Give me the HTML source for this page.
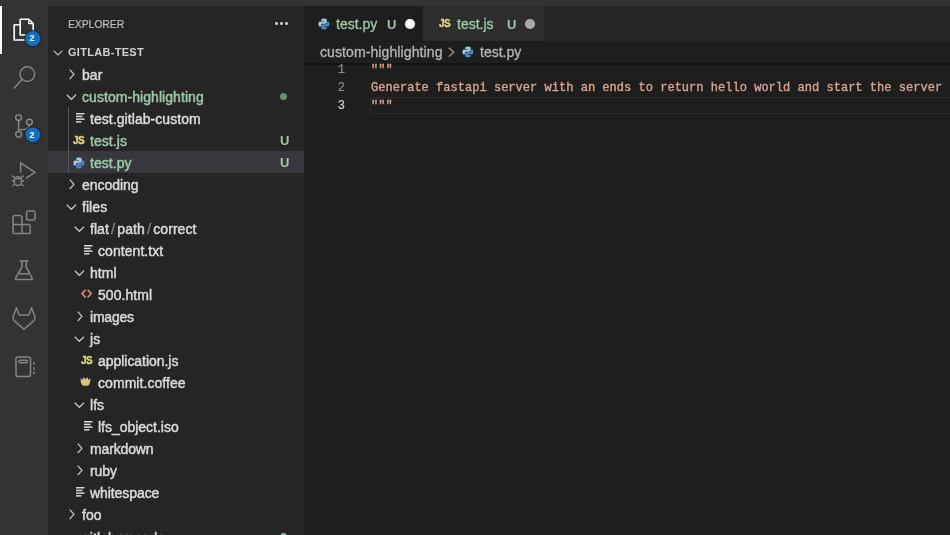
<!DOCTYPE html>
<html><head><meta charset="utf-8">
<style>
*{margin:0;padding:0;box-sizing:border-box}
html,body{width:950px;height:535px;overflow:hidden;background:#1e1e1e}
body{position:relative;font-family:"Liberation Sans",sans-serif;}
.abs{position:absolute}
svg{position:absolute;overflow:visible}
.abs,svg{will-change:transform}
.mono{font-family:"Liberation Mono",monospace}
</style></head><body>
<div class="abs" style="left:0;top:0;width:950px;height:6px;background:#333333"></div>
<div class="abs" style="left:0;top:6px;width:48px;height:529px;background:#333333"></div>
<div class="abs" style="left:0;top:6px;width:2px;height:48px;background:#ffffff"></div>
<div class="abs" style="left:48px;top:6px;width:256px;height:529px;background:#252526"></div>
<div class="abs" style="left:304px;top:6px;width:646px;height:35px;background:#252526"></div>
<div class="abs" style="left:304px;top:6px;width:119px;height:35px;background:#1e1e1e"></div>
<div class="abs" style="left:423px;top:6px;width:121px;height:35px;background:#2d2d2d"></div>
<div class="abs" style="left:304px;top:41px;width:646px;height:22px;background:#1e1e1e"></div>

<div class="abs" style="left:68.3px;top:6.8px;height:35px;line-height:35px;font-size:11.8px;color:#c0c0c0;transform:scaleX(0.875);transform-origin:0 0;-webkit-text-stroke:0.2px currentColor">EXPLORER</div>
<div class="abs" style="left:275px;top:22px;width:2.5px;height:2.5px;border-radius:50%;background:#c5c5c5"></div>
<div class="abs" style="left:280px;top:22px;width:2.5px;height:2.5px;border-radius:50%;background:#c5c5c5"></div>
<div class="abs" style="left:285px;top:22px;width:2.5px;height:2.5px;border-radius:50%;background:#c5c5c5"></div>

<svg style="left:53px;top:50px" width="10" height="6"><path d="M0.6 0.6 L5 5 L9.4 0.6" stroke="#c5c5c5" stroke-width="1.1" fill="none"/></svg>
<div class="abs" style="left:68px;top:41px;height:22px;line-height:22px;font-size:11px;font-weight:bold;letter-spacing:0.3px;color:#d0d0d0">GITLAB-TEST</div>
<svg style="left:0;top:0" width="48" height="535">
<g fill="none" stroke="#ffffff" stroke-width="1.6" stroke-linejoin="round"><path d="M20.2 19.2 H28.8 L33.2 23.6 V35 H20.2 Z"/><path d="M28.8 19.2 V23.6 H33.2" stroke-width="1.2"/><path d="M20 24.8 H14.2 V40 H28"/></g>
<g fill="none" stroke="#858585" stroke-width="1.5"><circle cx="27.3" cy="74.1" r="7.3"/><path d="M22 79.6 L13.8 88.4"/></g>
<g fill="none" stroke="#858585" stroke-width="1.5"><circle cx="18.6" cy="117.6" r="2.9"/><circle cx="29.4" cy="122.1" r="2.9"/><circle cx="18.6" cy="134.3" r="2.9"/><path d="M18.6 120.5 V131.4"/><path d="M29.4 125 C29.4 129 26 129.5 23 129.5 C20.5 129.5 18.6 130 18.6 131.4"/></g>
<g fill="none" stroke="#858585" stroke-width="1.5" stroke-linejoin="miter"><path d="M20.6 172.5 V162.8 L35 172.3 L25.8 178.4"/><ellipse cx="17.9" cy="181" rx="3.6" ry="4.6"/><path d="M14.5 178.6 H21.3"/><path d="M14.4 177.5 L12.2 175.6 M21.4 177.5 L23.6 175.6 M14.3 181 H11.8 M21.5 181 H24 M14.6 184 L12.4 186 M21.2 184 L23.4 186"/></g>
<g fill="none" stroke="#858585" stroke-width="1.5" stroke-linejoin="round"><rect x="26.6" y="211" width="8.4" height="9" rx="1.5"/><path d="M14.5 215.5 H20 Q22 215.5 22 217.5 V224.5 H28.5 Q30.2 224.5 30.2 226.5 V233.6 H14.5 Q13 233.6 13 232 V217 Q13 215.5 14.5 215.5 Z"/><path d="M13 224.5 H22 V233.6"/></g>
<g fill="none" stroke="#858585" stroke-width="1.5" stroke-linejoin="round"><path d="M19.5 261 H28.5"/><path d="M22 261 V267.2 L15.6 278 Q15 279.6 16.8 279.6 H31 Q32.8 279.6 32.1 278 L26.3 267.2 V261"/><path d="M18.8 273.8 H29"/></g>
<g fill="none" stroke="#858585" stroke-width="1.5" stroke-linejoin="round"><path d="M16.4 307.8 L19.2 315 H28.8 L31.6 307.8 L34.9 316.8 Q35.4 319.4 33.6 320.9 L24 329.2 L14.4 320.9 Q12.6 319.4 13.1 316.8 Z"/></g>
<g fill="none" stroke="#858585" stroke-width="1.5" stroke-linejoin="round"><rect x="16" y="356.9" width="14.5" height="19.5" rx="1.8"/><rect x="18.8" y="360.2" width="8.6" height="2.6" rx="1.3"/></g><g fill="#858585"><rect x="33.1" y="362" width="1.6" height="2.6" rx="0.6"/><rect x="33.1" y="367.2" width="1.6" height="2.6" rx="0.6"/><rect x="33.1" y="371.6" width="1.6" height="2.6" rx="0.6"/></g>
<circle cx="32.9" cy="38.7" r="8.9" fill="#262626" opacity="0.8"/>
<circle cx="32.9" cy="38.7" r="7.4" fill="#0f70c2"/>
<circle cx="32.9" cy="134.8" r="8.9" fill="#262626" opacity="0.8"/>
<circle cx="32.9" cy="134.8" r="7.4" fill="#0f70c2"/>
</svg>
<div class="abs" style="left:24.3px;top:30.400000000000002px;width:16px;height:16px;line-height:16px;text-align:center;font-size:9px;font-weight:bold;color:#ffffff">2</div>
<div class="abs" style="left:24.3px;top:126.50000000000001px;width:16px;height:16px;line-height:16px;text-align:center;font-size:9px;font-weight:bold;color:#ffffff">2</div>
<svg style="left:68.7px;top:69.1px" width="6" height="11"><path d="M0.7 0.7 L5 5.35 L0.7 10" stroke="#c5c5c5" stroke-width="1.25" fill="none"/></svg>
<div class="abs lbl" style="left:82px;top:63.5px;height:22px;line-height:22px;font-size:14px;letter-spacing:0.06px;color:#dadada;white-space:nowrap;-webkit-text-stroke:0.45px currentColor;">bar</div>
<svg style="left:65.7px;top:93.8px" width="11" height="6"><path d="M0.7 0.7 L5.35 5.3 L10 0.7" stroke="#c5c5c5" stroke-width="1.25" fill="none"/></svg>
<div class="abs lbl" style="left:82px;top:85.5px;height:22px;line-height:22px;font-size:14px;letter-spacing:0.06px;color:#9dc8a7;white-space:nowrap;-webkit-text-stroke:0.45px currentColor;">custom-highlighting</div>
<div class="abs" style="left:280px;top:93px;width:7px;height:7px;border-radius:50%;background:#6a8d72"></div>
<svg style="left:75.5px;top:113px" width="10" height="10"><rect x="0" y="0" width="8.5" height="1.5" fill="#d4d7d6"/><rect x="0" y="2.7" width="6.5" height="1.5" fill="#d4d7d6"/><rect x="0" y="5.4" width="8.5" height="1.5" fill="#d4d7d6"/><rect x="0" y="8.1" width="5.5" height="1.5" fill="#d4d7d6"/></svg>
<div class="abs lbl" style="left:90px;top:107.5px;height:22px;line-height:22px;font-size:14px;letter-spacing:0.06px;color:#dadada;white-space:nowrap;-webkit-text-stroke:0.45px currentColor;">test.gitlab-custom</div>
<span class="abs" style="left:73px;top:136px;font-size:10px;line-height:10px;font-weight:bold;color:#e0d47a;letter-spacing:-0.55px;-webkit-text-stroke:0.35px currentColor">JS</span>
<div class="abs lbl" style="left:90px;top:129.5px;height:22px;line-height:22px;font-size:14px;letter-spacing:0.06px;color:#9dc8a7;white-space:nowrap;-webkit-text-stroke:0.45px currentColor;">test.js</div>
<div class="abs" style="left:279.5px;top:129.5px;line-height:22px;font-size:13px;font-weight:bold;color:#9dc8a7">U</div>
<div class="abs" style="left:48px;top:151px;width:256px;height:22px;background:#37373d"></div>
<svg style="left:72.6px;top:156.5px" width="12" height="12" viewBox="0 0 13 13"><path d="M6.3 0.5 C3.5 0.5 3.6 1.8 3.6 1.8 V3.3 H6.5 V3.8 H2.4 C2.4 3.8 0.5 3.6 0.5 6.5 C0.5 9.4 2.2 9.3 2.2 9.3 H3.2 V7.9 C3.2 7.9 3.1 6.2 4.9 6.2 H7.8 C7.8 6.2 9.5 6.2 9.5 4.6 V1.9 C9.5 1.9 9.8 0.5 6.3 0.5 Z" fill="#a3c6e0"/><path d="M6.7 12.5 C9.5 12.5 9.4 11.2 9.4 11.2 V9.7 H6.5 V9.2 H10.6 C10.6 9.2 12.5 9.4 12.5 6.5 C12.5 3.6 10.8 3.7 10.8 3.7 H9.8 V5.1 C9.8 5.1 9.9 6.8 8.1 6.8 H5.2 C5.2 6.8 3.5 6.8 3.5 8.4 V11.1 C3.5 11.1 3.2 12.5 6.7 12.5 Z" fill="#4a86c0"/></svg>
<div class="abs lbl" style="left:90px;top:151.5px;height:22px;line-height:22px;font-size:14px;letter-spacing:0.06px;color:#9dc8a7;white-space:nowrap;-webkit-text-stroke:0.45px currentColor;">test.py</div>
<div class="abs" style="left:279.5px;top:151.5px;line-height:22px;font-size:13px;font-weight:bold;color:#9dc8a7">U</div>
<svg style="left:68.7px;top:179.1px" width="6" height="11"><path d="M0.7 0.7 L5 5.35 L0.7 10" stroke="#c5c5c5" stroke-width="1.25" fill="none"/></svg>
<div class="abs lbl" style="left:82px;top:173.5px;height:22px;line-height:22px;font-size:14px;letter-spacing:-0.05px;color:#dadada;white-space:nowrap;-webkit-text-stroke:0.45px currentColor;">encoding</div>
<svg style="left:65.7px;top:203.8px" width="11" height="6"><path d="M0.7 0.7 L5.35 5.3 L10 0.7" stroke="#c5c5c5" stroke-width="1.25" fill="none"/></svg>
<div class="abs lbl" style="left:82px;top:195.5px;height:22px;line-height:22px;font-size:14px;letter-spacing:0.06px;color:#dadada;white-space:nowrap;-webkit-text-stroke:0.45px currentColor;">files</div>
<svg style="left:73.7px;top:225.8px" width="11" height="6"><path d="M0.7 0.7 L5.35 5.3 L10 0.7" stroke="#c5c5c5" stroke-width="1.25" fill="none"/></svg>
<div class="abs lbl" style="left:90px;top:217.5px;height:22px;line-height:22px;font-size:14px;letter-spacing:0.06px;color:#dadada;white-space:nowrap;-webkit-text-stroke:0.45px currentColor;">flat<span style="color:#7a7a7a;padding:0 2.1px;font-size:15px">/</span>path<span style="color:#7a7a7a;padding:0 2.1px;font-size:15px">/</span>correct</div>
<svg style="left:83.5px;top:245px" width="10" height="10"><rect x="0" y="0" width="8.5" height="1.5" fill="#d4d7d6"/><rect x="0" y="2.7" width="6.5" height="1.5" fill="#d4d7d6"/><rect x="0" y="5.4" width="8.5" height="1.5" fill="#d4d7d6"/><rect x="0" y="8.1" width="5.5" height="1.5" fill="#d4d7d6"/></svg>
<div class="abs lbl" style="left:98px;top:239.5px;height:22px;line-height:22px;font-size:14px;letter-spacing:0.06px;color:#dadada;white-space:nowrap;-webkit-text-stroke:0.45px currentColor;">content.txt</div>
<svg style="left:73.7px;top:269.8px" width="11" height="6"><path d="M0.7 0.7 L5.35 5.3 L10 0.7" stroke="#c5c5c5" stroke-width="1.25" fill="none"/></svg>
<div class="abs lbl" style="left:90px;top:261.5px;height:22px;line-height:22px;font-size:14px;letter-spacing:0.06px;color:#dadada;white-space:nowrap;-webkit-text-stroke:0.45px currentColor;">html</div>
<svg style="left:80.7px;top:288.6px" width="12" height="10"><path d="M4.6 0.8 L1 4.6 L4.6 8.4 M6.6 0.8 L10.2 4.6 L6.6 8.4" stroke="#8e3323" stroke-width="2.6" fill="none" opacity="0.8"/><path d="M4.6 0.8 L1 4.6 L4.6 8.4 M6.6 0.8 L10.2 4.6 L6.6 8.4" stroke="#d6aa9c" stroke-width="1.2" fill="none"/></svg>
<div class="abs lbl" style="left:98px;top:283.5px;height:22px;line-height:22px;font-size:14px;letter-spacing:0.06px;color:#dadada;white-space:nowrap;-webkit-text-stroke:0.45px currentColor;">500.html</div>
<svg style="left:76.7px;top:311.1px" width="6" height="11"><path d="M0.7 0.7 L5 5.35 L0.7 10" stroke="#c5c5c5" stroke-width="1.25" fill="none"/></svg>
<div class="abs lbl" style="left:90px;top:305.5px;height:22px;line-height:22px;font-size:14px;letter-spacing:-0.22px;color:#dadada;white-space:nowrap;-webkit-text-stroke:0.45px currentColor;">images</div>
<svg style="left:73.7px;top:335.8px" width="11" height="6"><path d="M0.7 0.7 L5.35 5.3 L10 0.7" stroke="#c5c5c5" stroke-width="1.25" fill="none"/></svg>
<div class="abs lbl" style="left:90px;top:327.5px;height:22px;line-height:22px;font-size:14px;letter-spacing:0.06px;color:#dadada;white-space:nowrap;-webkit-text-stroke:0.45px currentColor;">js</div>
<span class="abs" style="left:81px;top:356px;font-size:10px;line-height:10px;font-weight:bold;color:#e0d47a;letter-spacing:-0.55px;-webkit-text-stroke:0.35px currentColor">JS</span>
<div class="abs lbl" style="left:98px;top:349.5px;height:22px;line-height:22px;font-size:14px;letter-spacing:-0.04px;color:#dadada;white-space:nowrap;-webkit-text-stroke:0.45px currentColor;">application.js</div>
<svg style="left:80.4px;top:375.8px" width="12" height="11"><path d="M0.6 1.8 L2.2 4.2 L3.6 1.2 L5.5 3.2 L7.4 1.2 L8.8 4.2 L10.4 1.8 L10.2 5.4 H0.8 Z" fill="#cfc9b0"/><path d="M0.8 5 H10.2 Q10.1 8.8 7.6 9.8 H3.4 Q0.9 8.8 0.8 5 Z" fill="#d5c95a"/></svg>
<div class="abs lbl" style="left:98px;top:371.5px;height:22px;line-height:22px;font-size:14px;letter-spacing:0.06px;color:#dadada;white-space:nowrap;-webkit-text-stroke:0.45px currentColor;">commit.coffee</div>
<svg style="left:73.7px;top:401.8px" width="11" height="6"><path d="M0.7 0.7 L5.35 5.3 L10 0.7" stroke="#c5c5c5" stroke-width="1.25" fill="none"/></svg>
<div class="abs lbl" style="left:90px;top:393.5px;height:22px;line-height:22px;font-size:14px;letter-spacing:0.06px;color:#dadada;white-space:nowrap;-webkit-text-stroke:0.45px currentColor;">lfs</div>
<svg style="left:83.5px;top:421px" width="10" height="10"><rect x="0" y="0" width="8.5" height="1.5" fill="#d4d7d6"/><rect x="0" y="2.7" width="6.5" height="1.5" fill="#d4d7d6"/><rect x="0" y="5.4" width="8.5" height="1.5" fill="#d4d7d6"/><rect x="0" y="8.1" width="5.5" height="1.5" fill="#d4d7d6"/></svg>
<div class="abs lbl" style="left:98px;top:415.5px;height:22px;line-height:22px;font-size:14px;letter-spacing:-0.02px;color:#dadada;white-space:nowrap;-webkit-text-stroke:0.45px currentColor;">lfs_object.iso</div>
<svg style="left:76.7px;top:443.1px" width="6" height="11"><path d="M0.7 0.7 L5 5.35 L0.7 10" stroke="#c5c5c5" stroke-width="1.25" fill="none"/></svg>
<div class="abs lbl" style="left:90px;top:437.5px;height:22px;line-height:22px;font-size:14px;letter-spacing:-0.14px;color:#dadada;white-space:nowrap;-webkit-text-stroke:0.45px currentColor;">markdown</div>
<svg style="left:76.7px;top:465.1px" width="6" height="11"><path d="M0.7 0.7 L5 5.35 L0.7 10" stroke="#c5c5c5" stroke-width="1.25" fill="none"/></svg>
<div class="abs lbl" style="left:90px;top:459.5px;height:22px;line-height:22px;font-size:14px;letter-spacing:-0.1px;color:#dadada;white-space:nowrap;-webkit-text-stroke:0.45px currentColor;">ruby</div>
<svg style="left:75.5px;top:487px" width="10" height="10"><rect x="0" y="0" width="8.5" height="1.5" fill="#d4d7d6"/><rect x="0" y="2.7" width="6.5" height="1.5" fill="#d4d7d6"/><rect x="0" y="5.4" width="8.5" height="1.5" fill="#d4d7d6"/><rect x="0" y="8.1" width="5.5" height="1.5" fill="#d4d7d6"/></svg>
<div class="abs lbl" style="left:90px;top:481.5px;height:22px;line-height:22px;font-size:14px;letter-spacing:-0.075px;color:#dadada;white-space:nowrap;-webkit-text-stroke:0.45px currentColor;">whitespace</div>
<svg style="left:68.7px;top:509.1px" width="6" height="11"><path d="M0.7 0.7 L5 5.35 L0.7 10" stroke="#c5c5c5" stroke-width="1.25" fill="none"/></svg>
<div class="abs lbl" style="left:82px;top:503.5px;height:22px;line-height:22px;font-size:14px;letter-spacing:0.06px;color:#dadada;white-space:nowrap;-webkit-text-stroke:0.45px currentColor;">foo</div>
<svg style="left:65.7px;top:535.3px" width="11" height="6"><path d="M0.7 0.7 L5.35 5.3 L10 0.7" stroke="#c5c5c5" stroke-width="1.25" fill="none"/></svg>
<div class="abs lbl" style="left:82px;top:527.0px;height:22px;line-height:22px;font-size:14px;letter-spacing:0.06px;color:#dadada;white-space:nowrap;-webkit-text-stroke:0.45px currentColor;">gitlab-vscode</div>
<div class="abs" style="left:280px;top:527.0px;line-height:22px;font-size:13px;font-weight:bold;color:#9dc8a7">9</div>
<div class="abs" style="left:68px;top:107px;width:1px;height:66px;background:#585858"></div>
<!-- tabs -->
<svg style="left:318px;top:17.5px" width="12" height="12" viewBox="0 0 13 13"><path d="M6.3 0.5 C3.5 0.5 3.6 1.8 3.6 1.8 V3.3 H6.5 V3.8 H2.4 C2.4 3.8 0.5 3.6 0.5 6.5 C0.5 9.4 2.2 9.3 2.2 9.3 H3.2 V7.9 C3.2 7.9 3.1 6.2 4.9 6.2 H7.8 C7.8 6.2 9.5 6.2 9.5 4.6 V1.9 C9.5 1.9 9.8 0.5 6.3 0.5 Z" fill="#a3c6e0"/><path d="M6.7 12.5 C9.5 12.5 9.4 11.2 9.4 11.2 V9.7 H6.5 V9.2 H10.6 C10.6 9.2 12.5 9.4 12.5 6.5 C12.5 3.6 10.8 3.7 10.8 3.7 H9.8 V5.1 C9.8 5.1 9.9 6.8 8.1 6.8 H5.2 C5.2 6.8 3.5 6.8 3.5 8.4 V11.1 C3.5 11.1 3.2 12.5 6.7 12.5 Z" fill="#4a86c0"/></svg>
<div class="abs" style="left:336px;top:6.5px;line-height:35px;font-size:14px;color:#9dc8a7;-webkit-text-stroke:0.3px currentColor">test.py</div>
<div class="abs" style="left:386.5px;top:6.5px;line-height:35px;font-size:13px;font-weight:bold;color:#9dc8a7">U</div>
<div class="abs" style="left:405px;top:19px;width:9.5px;height:9.5px;border-radius:50%;background:#ffffff"></div>
<span class="abs" style="left:439px;top:18.5px;font-size:10px;line-height:10px;font-weight:bold;color:#e0d47a;letter-spacing:-0.55px;-webkit-text-stroke:0.35px currentColor">JS</span>
<div class="abs" style="left:456.5px;top:6.5px;line-height:35px;font-size:14px;color:#9dc8a7;-webkit-text-stroke:0.3px currentColor">test.js</div>
<div class="abs" style="left:506.5px;top:6.5px;line-height:35px;font-size:13px;font-weight:bold;color:#9dc8a7">U</div>
<div class="abs" style="left:525px;top:19px;width:9.5px;height:9.5px;border-radius:50%;background:#a8a8a8"></div>

<!-- breadcrumb -->
<div class="abs" style="left:320px;top:40.5px;line-height:22px;font-size:14px;letter-spacing:0.1px;color:#b6b6b6;-webkit-text-stroke:0.3px currentColor">custom-highlighting</div>
<svg style="left:447.5px;top:47.2px" width="7" height="11"><path d="M0.8 0.8 L5.8 5.2 L0.8 9.6" stroke="#a0a0a0" stroke-width="1.2" fill="none"/></svg>
<svg style="left:462.4px;top:46px" width="11.8" height="11.8" viewBox="0 0 13 13"><path d="M6.3 0.5 C3.5 0.5 3.6 1.8 3.6 1.8 V3.3 H6.5 V3.8 H2.4 C2.4 3.8 0.5 3.6 0.5 6.5 C0.5 9.4 2.2 9.3 2.2 9.3 H3.2 V7.9 C3.2 7.9 3.1 6.2 4.9 6.2 H7.8 C7.8 6.2 9.5 6.2 9.5 4.6 V1.9 C9.5 1.9 9.8 0.5 6.3 0.5 Z" fill="#a3c6e0"/><path d="M6.7 12.5 C9.5 12.5 9.4 11.2 9.4 11.2 V9.7 H6.5 V9.2 H10.6 C10.6 9.2 12.5 9.4 12.5 6.5 C12.5 3.6 10.8 3.7 10.8 3.7 H9.8 V5.1 C9.8 5.1 9.9 6.8 8.1 6.8 H5.2 C5.2 6.8 3.5 6.8 3.5 8.4 V11.1 C3.5 11.1 3.2 12.5 6.7 12.5 Z" fill="#4a86c0"/></svg>
<div class="abs" style="left:480px;top:40.5px;line-height:22px;font-size:14px;color:#b6b6b6;-webkit-text-stroke:0.3px currentColor">test.py</div>

<!-- editor -->
<div class="abs" style="left:304px;top:63px;width:646px;height:2px;background:#141414"></div><div class="abs" style="left:304px;top:65px;width:646px;height:1px;background:#1b1b1b"></div>
<div class="abs" style="left:370px;top:96.6px;width:580px;height:17px;border:1px solid #2a2a2a;border-right:none"></div>
<div class="abs mono" style="left:304px;top:61.3px;width:41px;text-align:right;font-size:12px;line-height:18px;color:#8a8a8a;-webkit-text-stroke:0.2px currentColor">1<br>2<br><span style="color:#d0d0d0">3</span></div>
<div class="abs mono" style="left:370.6px;top:61.3px;font-size:12.065px;line-height:18px;color:#d9a58d;white-space:pre;-webkit-text-stroke:0.35px currentColor">"""
Generate fastapi server with an ends to return hello world and start the server
"""</div>

</body></html>
